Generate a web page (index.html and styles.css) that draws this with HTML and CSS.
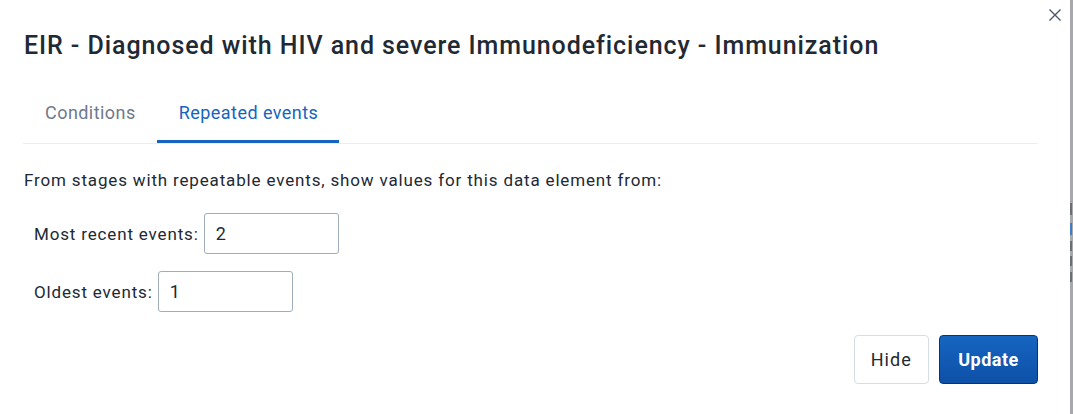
FILE: index.html
```html
<!DOCTYPE html>
<html lang="en">
<head>
<meta charset="utf-8">
<title>Repeated events</title>
<link rel="stylesheet" href="styles.css">
</head>
<body>
<div class="page">
  <div class="modal">
    <button class="close" aria-label="Close">
      <svg width="14" height="14" viewBox="0 0 14 14"><path d="M1.5 1.5 L12.5 12.5 M12.5 1.5 L1.5 12.5" stroke="#4a5768" stroke-width="1.4" fill="none"/></svg>
    </button>
    <h1 class="title">EIR - Diagnosed with HIV and severe Immunodeficiency - Immunization</h1>
    <div class="tabs">
      <div class="tab">Conditions</div>
      <div class="tab active">Repeated events</div>
    </div>
    <p class="intro">From stages with repeatable events, show values for this data element from:</p>
    <div class="field">
      <label>Most recent events:</label>
      <input class="input" type="text" value="2">
    </div>
    <div class="field">
      <label>Oldest events:</label>
      <input class="input" type="text" value="1">
    </div>
    <div class="actions">
      <button class="btn">Hide</button>
      <button class="btn primary">Update</button>
    </div>
  </div>
  <div class="backdrop">
    <span class="mark m1"></span>
    <span class="mark m2"></span>
    <span class="mark m3"></span>
    <span class="mark m4"></span>
    <span class="mark m5"></span>
  </div>
</div>
</body>
</html>
```

FILE: styles.css
```css
* { box-sizing: border-box; }
html, body { margin: 0; padding: 0; }
body {
  font-family: Roboto, "Noto Sans", sans-serif;
  color: #212934;
  background: #ffffff;
  width: 1073px;
  height: 414px;
  overflow: hidden;
}
.page {
  display: flex;
  height: 414px;
}
.modal {
  position: relative;
  width: 1070px;
  height: 414px;
  background: #ffffff;
  padding: 0 32px 0 23px;
  display: flex;
  flex-direction: column;
}
.close {
  position: absolute;
  top: 8px;
  right: 8px;
  width: 14px;
  height: 14px;
  padding: 0;
  border: 0;
  background: transparent;
  display: flex;
}
.title {
  margin: 30px 0 0 1px;
  font-size: 25px;
  font-weight: 500;
  line-height: 32px;
  color: #212934;
  letter-spacing: 0.93px;
}
.tabs {
  margin-top: 30px;
  display: flex;
  border-bottom: 1px solid #e8edf2;
}
.tab {
  padding: 0 21px 0 22px;
  height: 51px;
  line-height: 41px;
  font-size: 18px;
  letter-spacing: 0.45px;
  color: #6e7a8a;
  border-bottom: 3px solid transparent;
}
.tab.active {
  color: #1565c0;
  border-bottom-color: #1565c0;
}
.intro {
  margin: 26px 0 0 1px;
  font-size: 17px;
  letter-spacing: 0.84px;
  line-height: 20px;
}
.field {
  display: flex;
  align-items: center;
  gap: 5px;
  margin-left: 11px;
  margin-top: 23px;
}
.field + .field { margin-top: 17px; }
.field label {
  font-size: 17px;
  letter-spacing: 0.84px;
}
.input {
  width: 135px;
  height: 41px;
  border: 1px solid #a0adba;
  border-radius: 3px;
  padding: 0 11px;
  font-family: Roboto, "Noto Sans", sans-serif;
  font-size: 18px;
  color: #212934;
  background: #fff;
}
.actions {
  display: flex;
  justify-content: flex-end;
  gap: 10px;
  margin-top: 23px;
}
.btn {
  height: 49px;
  padding: 0 16px;
  border: 1px solid #d5dde5;
  border-radius: 4px;
  background: #ffffff;
  font-family: Roboto, "Noto Sans", sans-serif;
  font-size: 18px;
  color: #212934;
  letter-spacing: 1.1px;
}
.btn.primary {
  width: 99px;
  border-color: #093371;
  background: linear-gradient(180deg, #1565c0 0%, #0e50a8 100%);
  color: #ffffff;
  font-weight: 700;
  letter-spacing: 0.5px;
}
.backdrop {
  position: relative;
  width: 3px;
  height: 414px;
  background: #a6a8ab;
}
.mark {
  position: absolute;
  left: 0;
  width: 2px;
  background: #6b6f74;
}
.m1 { top: 203px; height: 12px; }
.m2 { top: 223px; height: 12px; background: #3f7cc4; }
.m3 { top: 241px; height: 10px; }
.m4 { top: 256px; height: 10px; }
.m5 { top: 272px; height: 10px; }
```
